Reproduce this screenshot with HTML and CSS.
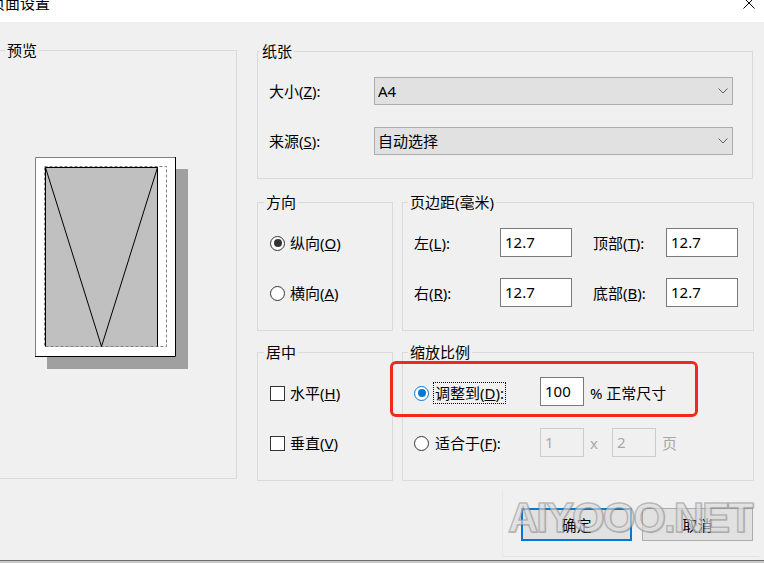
FILE: index.html
```html
<!DOCTYPE html>
<html lang="zh-CN">

<head>
    <meta charset="UTF-8">
    <title>页面设置</title>
    <link rel="stylesheet" href="styles.css">
</head>

<body>
    <div class="titlebar">
        <span class="title">页面设置</span>
        <svg class="close" width="12" height="12" viewBox="0 0 12 12">
            <path d="M0.5 0.5L11.5 11.5M11.5 0.5L0.5 11.5" stroke="#000" stroke-width="1" fill="none" />
        </svg>
    </div>

    <div class="dialog">
        <!-- 预览 -->
        <fieldset class="group preview">
            <legend>预览</legend>
            <svg class="sheet" width="160" height="222" viewBox="0 0 160 222">
                <rect x="17" y="19" width="141" height="200" fill="#a0a0a0" />
                <rect x="5" y="7" width="141" height="200" fill="#fff" />
                <path d="M5.5 207V7.5H146" stroke="#808080" fill="none" />
                <path d="M145.5 7V206.5H5" stroke="#000" fill="none" />
                <rect x="15" y="17" width="113" height="180" fill="#c0c0c0" />
                <rect x="14.5" y="16.5" width="122" height="180" fill="none" stroke="#808080" stroke-dasharray="3 2" />
                <path d="M15.5 196.5V17.5H127.5V196.5" stroke="#000" fill="none" />
                <path d="M15.5 17.5L71.5 196.5L127.5 17.5" stroke="#000" fill="none" />
            </svg>
        </fieldset>

        <div class="side">
            <!-- 纸张 -->
            <fieldset class="group paper">
                <legend>纸张</legend>
                <div class="field">
                    <span class="label">大小(<u>Z</u>):</span>
                    <div class="select">
                        <span>A4</span>
                        <svg width="10" height="6" viewBox="0 0 10 6"><path d="M0.5 0.5L5 5L9.5 0.5" stroke="#606060" fill="none" /></svg>
                    </div>
                </div>
                <div class="field">
                    <span class="label">来源(<u>S</u>):</span>
                    <div class="select">
                        <span>自动选择</span>
                        <svg width="10" height="6" viewBox="0 0 10 6"><path d="M0.5 0.5L5 5L9.5 0.5" stroke="#606060" fill="none" /></svg>
                    </div>
                </div>
            </fieldset>

            <div class="row first">
                <!-- 方向 -->
                <fieldset class="group orient">
                    <legend>方向</legend>
                    <div class="field">
                        <span class="radio checked"></span>纵向(<u>O</u>)
                    </div>
                    <div class="field">
                        <span class="radio"></span>横向(<u>A</u>)
                    </div>
                </fieldset>
                <!-- 页边距 -->
                <fieldset class="group margins">
                    <legend>页边距(毫米)</legend>
                    <div class="field">
                        <span class="label">左(<u>L</u>):</span>
                        <span class="input">12.7</span>
                        <span class="label wide">顶部(<u>T</u>):</span>
                        <span class="input">12.7</span>
                    </div>
                    <div class="field">
                        <span class="label">右(<u>R</u>):</span>
                        <span class="input">12.7</span>
                        <span class="label wide">底部(<u>B</u>):</span>
                        <span class="input">12.7</span>
                    </div>
                </fieldset>
            </div>

            <div class="row second">
                <!-- 居中 -->
                <fieldset class="group center">
                    <legend>居中</legend>
                    <div class="field">
                        <span class="check"></span>水平(<u>H</u>)
                    </div>
                    <div class="field">
                        <span class="check"></span>垂直(<u>V</u>)
                    </div>
                </fieldset>
                <!-- 缩放比例 -->
                <fieldset class="group scale">
                    <legend>缩放比例</legend>
                    <div class="field">
                        <span class="radio blue checked"></span>
                        <span class="choice"><span class="focus">调整到(<u>D</u>):</span></span>
                        <span class="input small">100</span>
                        <span class="suffix">% 正常尺寸</span>
                    </div>
                    <div class="field">
                        <span class="radio"></span>
                        <span class="choice plain">适合于(<u>F</u>):</span>
                        <span class="input small off">1</span>
                        <span class="suffix muted">x</span>
                        <span class="input small off gap">2</span>
                        <span class="suffix muted">页</span>
                    </div>
                </fieldset>
                <div class="highlight"></div>
            </div>

            <div class="buttons">
                <button class="btn default">确定</button>
                <button class="btn">取消</button>
            </div>
        </div>
    </div>

    <div class="watermark">AIYOOO.NET</div>
    <div class="taskbar"></div>
</body>

</html>
```

FILE: styles.css
```css
* {
    margin: 0;
    padding: 0;
    box-sizing: border-box;
}

body {
    width: 764px;
    height: 563px;
    overflow: hidden;
    position: relative;
    display: flex;
    flex-direction: column;
    background-color: #f0f0f0;
    color: #000;
    font: 15px/20px "Noto Sans", "Noto Sans CJK SC", sans-serif;
}

u {
    text-decoration-thickness: 1px;
}

/* 标题栏 */

.titlebar {
    flex: none;
    height: 22px;
    display: flex;
    align-items: flex-start;
    overflow: hidden;
    background-color: #fff;
}

.title {
    margin: -6px 0 0 -10px;
    line-height: 18px;
}

.close {
    margin: -3px 9px 0 auto;
}

/* 主体 */

.dialog {
    flex: none;
    display: flex;
    padding-top: 20px;
}

.group {
    min-width: 0;
    border: 1px solid #dadada;
    padding: 7px 0 12px 0;
}

.group legend {
    line-height: 17px;
    padding: 0 2px;
    margin-left: 5px;
}

.group .field {
    padding-left: 12px;
}

.preview {
    width: 247px;
    height: 437px;
    margin-left: -10px;
    padding: 0;
}

.preview legend {
    margin-left: 14px;
}

.sheet {
    display: block;
    margin: 91px 0 0 39px;
}

.side {
    width: 497px;
    margin: 1px 0 0 20px;
}

.field {
    height: 50px;
    display: flex;
    align-items: center;
    white-space: nowrap;
}

/* 纸张 */

.paper {
    width: 496px;
    padding-top: 6px;
}

.paper legend {
    margin-left: 2px;
}

.paper .field {
    padding-left: 11px;
}

.paper .label {
    width: 105px;
}

.select {
    width: 359px;
    height: 28px;
    display: flex;
    align-items: center;
    justify-content: space-between;
    padding: 0 4px 0 3px;
    border: 1px solid #adadad;
    background-color: #e1e1e1;
}

.row {
    display: flex;
    gap: 9px;
    position: relative;
}

.row.first {
    margin-top: 15px;
}

.row.second {
    margin-top: 13px;
}

.orient, .center {
    width: 136px;
}

.orient legend, .center legend {
    margin-left: 6px;
}

.margins, .scale {
    width: 352px;
}

.margins .field, .scale .field {
    padding-left: 11px;
}

/* 单选 复选 */

.radio {
    width: 15px;
    height: 15px;
    margin-right: 5px;
    display: flex;
    align-items: center;
    justify-content: center;
    border: 1px solid #333;
    border-radius: 50%;
    background-color: #fff;
}

.radio.checked::after {
    content: "";
    width: 8px;
    height: 8px;
    border-radius: 50%;
    background-color: #333;
}

.radio.blue {
    border-color: #0078d7;
}

.radio.blue::after {
    background-color: #0078d7;
}

.check {
    width: 15px;
    height: 15px;
    margin-right: 5px;
    border: 1px solid #333;
    background-color: #fff;
}

/* 输入框 */

.input {
    width: 72px;
    height: 29px;
    padding-left: 4px;
    line-height: 26px;
    border: 1px solid #7a7a7a;
    background-color: #fff;
}

.margins .input {
    margin-top: -2px;
}

.margins .label {
    width: 86px;
}

.margins .label.wide {
    width: 73px;
    margin-left: 21px;
}

.scale .radio {
    margin-right: 4px;
}

.choice {
    width: 107px;
}

.choice.plain {
    padding-left: 2px;
}

.focus {
    padding: 0 1px;
    border: 1px dotted #000;
    line-height: 21px;
}

.input.small {
    width: 44px;
    margin-top: -3px;
}

.input.off {
    margin-top: -1px;
    border-color: #cccccc;
    background-color: #f0f0f0;
    color: #a8a8a8;
}

.input.gap {
    margin-left: 14px;
}

.suffix {
    margin-left: 6px;
}

.muted {
    color: #a8a8a8;
}

/* 红框标注 */

.highlight {
    position: absolute;
    left: 133px;
    top: 17px;
    width: 308px;
    height: 56px;
    border: 3px solid #f2281c;
    border-radius: 6px;
}

/* 按钮 */

.buttons {
    display: flex;
    justify-content: flex-end;
    gap: 10px;
    margin-top: 27px;
    padding-right: 1px;
}

.btn {
    width: 111px;
    height: 33px;
    border: 1px solid #adadad;
    background-color: #e1e1e1;
    color: #000;
    font: inherit;
}

.btn.default {
    border: 2px solid #0078d7;
}

.watermark {
    position: absolute;
    left: 502px;
    top: 490px;
    width: 257px;
    height: 67px;
    padding: 7px 0 0 5px;
    border-left: 1px solid rgba(0, 0, 0, 0.03);
    border-bottom: 1px solid rgba(0, 0, 0, 0.04);
    font: bold 42px/42px "Liberation Sans", sans-serif;
    letter-spacing: -2px;
    color: rgba(236, 236, 236, 0.6);
    -webkit-text-stroke: 1.5px rgba(140, 140, 140, 0.55);
    text-shadow: 1px 1px 1px rgba(0, 0, 0, 0.12);
    pointer-events: none;
}

.taskbar {
    margin-top: auto;
    height: 3px;
    border-top: 1px solid #6e6e6e;
    background-color: #c9c9c9;
}
```
